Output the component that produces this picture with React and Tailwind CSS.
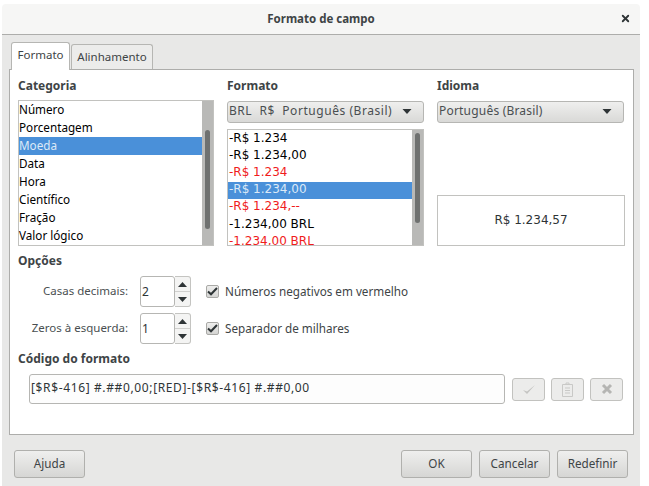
import { X } from 'lucide-react';

const categories = ['Número', 'Porcentagem', 'Moeda', 'Data', 'Hora', 'Científico', 'Fração', 'Valor lógico'];

const formats = [
  { label: '-R$ 1.234' },
  { label: '-R$ 1.234,00' },
  { label: '-R$ 1.234', red: true },
  { label: '-R$ 1.234,00', selected: true },
  { label: '-R$ 1.234,--', red: true },
  { label: '-1.234,00 BRL' },
  { label: '-1.234,00 BRL', red: true },
];

function Caret() {
  return (
    <svg width="10" height="5" viewBox="0 0 10 5" className="shrink-0">
      <path d="M0.5 0H9.5L5 5Z" fill="#2e3436" />
    </svg>
  );
}

function Select({ label, className }) {
  return (
    <div className={`flex h-[22px] items-center justify-between rounded-[3px] border border-[#b6b6b3] bg-gradient-to-b from-[#efefee] to-[#d9d9d7] pb-[2px] pl-[1px] pr-[11px] text-[#4a4f51] ${className}`}>
      <span className="whitespace-pre">{label}</span>
      <Caret />
    </div>
  );
}

function Scrollbar({ thumb }) {
  return (
    <div className={`flex w-[11px] shrink-0 justify-center bg-[#b9b9b7] ${thumb}`}>
      <div className="h-full w-[5px] rounded-full bg-[#6f7170]" />
    </div>
  );
}

function Spin({ value }) {
  return (
    <div className="flex h-[31px]">
      <div className="flex w-[35px] items-center rounded-[3px] border border-[#b6b6b3] bg-white pl-[1px] text-[#2e3436]">{value}</div>
      <div className="flex w-[16px] flex-col rounded-r-[3px] border border-l-0 border-[#c4c4c1] bg-[#f4f4f3]">
        <div className="flex flex-1 items-center justify-center border-b border-[#d0d0ce]">
          <svg width="9" height="5" viewBox="0 0 9 5"><path d="M0 5H9L4.500 0Z" fill="#2e3436" /></svg>
        </div>
        <div className="flex flex-1 items-center justify-center">
          <svg width="9" height="5" viewBox="0 0 9 5"><path d="M0 0H9L4.500 5Z" fill="#2e3436" /></svg>
        </div>
      </div>
    </div>
  );
}

function Check({ label }) {
  return (
    <div className="ml-[15px] flex items-center gap-[6px] text-[11.700px] text-[#3e4446]">
      <div className="flex h-[13px] w-[13px] items-center justify-center rounded-[2px] border border-[#a9a9a6] bg-gradient-to-b from-[#eeeeed] to-[#d5d5d3]">
        <svg width="11" height="9" viewBox="0 0 11 9"><path d="M1 4.500L4 7.300L10 1" fill="none" stroke="#2e3436" strokeWidth="2" /></svg>
      </div>
      <span className="pb-[2px]">{label}</span>
    </div>
  );
}

function OptionRow({ label, value, className }) {
  return (
    <div className={`flex items-center ${className}`}>
      <div className="w-[110px] pb-[2px] text-right text-[11.500px] text-[#4a4f51]">{label}</div>
      <div className="ml-[12px]"><Spin value={value} /></div>
      <Check label={value === '2' ? 'Números negativos em vermelho' : 'Separador de milhares'} />
    </div>
  );
}

function IconButton({ children, className }) {
  return (
    <div className={`flex h-[23px] w-[33px] items-center justify-center rounded-[3px] border border-[#c2c2bf] bg-[#ececeb] ${className}`}>
      {children}
    </div>
  );
}

function DialogButton({ label, className }) {
  return (
    <div className={`flex h-[28px] w-[71px] items-center justify-center rounded-[3px] border border-[#b0b0ad] bg-gradient-to-b from-[#efefee] to-[#d6d6d4] pb-[2px] text-[11.700px] text-[#3e4446] ${className}`}>
      {label}
    </div>
  );
}

export default function App() {
  return (
    <div className="h-[486px] w-[649px] overflow-hidden bg-white pl-[2px] pt-[4px] text-[12px] leading-[16px] [font-family:'Noto_Sans',sans-serif]">
      <div className="flex h-[482px] w-[638px] flex-col">
        {/* title bar */}
        <div className="relative flex h-[31px] shrink-0 items-center justify-center rounded-t-[4px] border-b border-[#adadab] bg-[#f6f6f5] text-[11.500px] font-bold text-[#3e4446]">
          Formato de campo
          <X className="absolute right-[9px] top-[9px] h-[11px] w-[11px] text-[#2e3436]" strokeWidth={4} />
        </div>

        <div className="flex flex-1 flex-col bg-[#e8e8e7] px-[7px] pt-[7px]">
          {/* tabs */}
          <div className="flex h-[27px] items-end pl-[2px] text-[11.500px]">
            <div className="relative z-10 -mb-[1px] flex h-[28px] w-[59px] items-center justify-center rounded-t-[3px] border border-b-0 border-[#b6b6b3] bg-white pb-[3px] text-[#3e4446]">Formato</div>
            <div className="ml-[1px] flex h-[25px] w-[82px] items-center justify-center rounded-t-[3px] border border-b-0 border-[#b6b6b3] bg-[#ececeb] pb-[1px] text-[#3e4446]">Alinhamento</div>
          </div>

          {/* panel */}
          <div className="h-[366px] w-[625px] border border-[#adadab] bg-white pl-[8px] pt-[8px]">
            <div className="flex">
              <div className="w-[196px]">
                <div className="h-[16px] font-bold leading-[16px] text-[#3e4446]">Categoria</div>
                <div className="mt-[6px] flex h-[146px] border border-[#c2c2bf] bg-white">
                  <div className="flex-1 text-[11.700px] text-black">
                    {categories.map((c) => (
                      <div key={c} className={`flex h-[18px] items-center pb-[2px] ${c === 'Moeda' ? 'bg-[#4a90d9] text-[#dce9f7]' : ''}`}>{c}</div>
                    ))}
                  </div>
                  <Scrollbar thumb="py-[29px] pb-[16px]" />
                </div>
              </div>

              <div className="ml-[13px] w-[197px]">
                <div className="h-[16px] font-bold text-[#3e4446]">Formato</div>
                <Select label="BRL  R$  Português (Brasil)" className="mt-[7px] tracking-[0.55px]" />
                <div className="mt-[6px] flex h-[117px] border border-[#c2c2bf] bg-white">
                  <div className="flex-1 overflow-hidden [font-family:'DejaVu_Sans',sans-serif]">
                    {formats.map((f, i) => (
                      <div key={i} className={`flex h-[17.200px] items-center whitespace-nowrap pb-[2px] pl-[1px] ${f.selected ? 'bg-[#4a90d9] text-[#dce9f7]' : f.red ? 'text-[#f01c1c]' : 'text-black'}`}>{f.label}</div>
                    ))}
                  </div>
                  <Scrollbar thumb="pt-[3px] pb-[22px]" />
                </div>
              </div>

              <div className="ml-[13px] w-[188px]">
                <div className="h-[16px] font-bold text-[#3e4446]">Idioma</div>
                <Select label="Português (Brasil)" className="mt-[7px] w-[187px] tracking-[0.2px]" />
                <div className="mt-[72px] flex h-[51px] items-center justify-center border border-[#c2c2bf] bg-white pb-[2px] text-[#2e3436] [font-family:'DejaVu_Sans',sans-serif]">R$ 1.234,57</div>
              </div>
            </div>

            <div className="mt-[7px] h-[16px] font-bold text-[#3e4446]">Opções</div>
            <OptionRow label="Casas decimais:" value="2" className="mt-[7px]" />
            <OptionRow label="Zeros à esquerda:" value="1" className="mt-[6px]" />

            <div className="mt-[7px] h-[16px] font-bold text-[#3e4446]">Código do formato</div>
            <div className="mt-[7px] flex items-center pl-[11px]">
              <div className="flex h-[30px] w-[476px] items-center whitespace-nowrap rounded-[3px] border border-[#b6b6b3] bg-[#fdfdfd] pb-[2px] pl-[1px] tracking-[0.63px] text-[#2e3436]">
                [$R$-416] #.##0,00;[RED]-[$R$-416] #.##0,00
              </div>
              <IconButton className="ml-[7px]">
                <svg width="14" height="11" viewBox="0 0 14 11"><path d="M1 6L5 10L13 1L5 7.500Z" fill="#c4c4c2" /></svg>
              </IconButton>
              <IconButton className="ml-[6px]">
                <svg width="13" height="15" viewBox="0 0 13 15" fill="none" stroke="#c9c9c7"><path d="M1.500 2.500H11.500V14.500H1.500Z" /><path d="M4 6H9M4 8.500H9M4 11H9" /><path d="M5 2.500V1H8V2.500" /></svg>
              </IconButton>
              <IconButton className="ml-[6px]">
                <svg width="12" height="12" viewBox="0 0 12 12"><path d="M2 2L10 10M10 2L2 10" stroke="#b5b5b3" strokeWidth="3" /></svg>
              </IconButton>
            </div>
          </div>

          {/* footer */}
          <div className="mt-[15px] flex pl-[5px]">
            <DialogButton label="Ajuda" />
            <DialogButton label="OK" className="ml-auto" />
            <DialogButton label="Cancelar" className="ml-[7px]" />
            <DialogButton label="Redefinir" className="ml-[7px] mr-[5px]" />
          </div>
        </div>
      </div>
    </div>
  );
}
